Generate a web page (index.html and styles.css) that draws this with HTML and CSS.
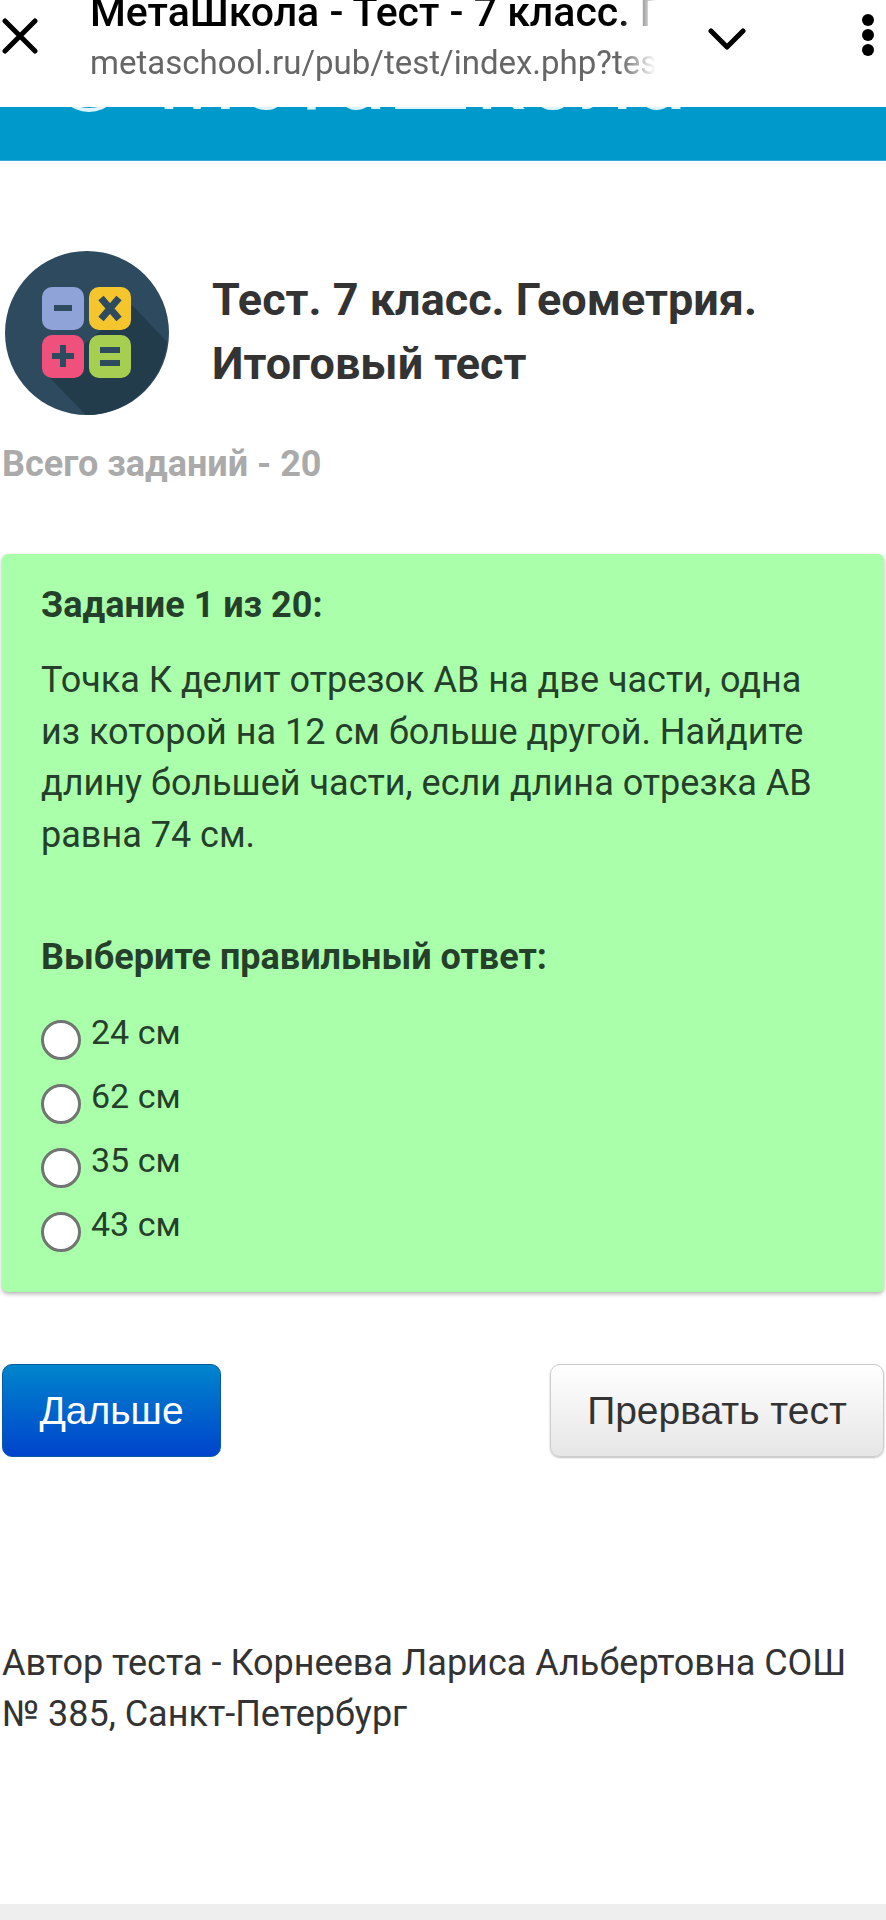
FILE: index.html
```html
<!DOCTYPE html>
<html lang="ru">
<head>
  <meta charset="UTF-8">
  <meta name="viewport" content="width=device-width, initial-scale=1.0">
  <title>МетаШкола - Тест - 7 класс</title>
  <link rel="stylesheet" href="styles.css">
</head>
<body>

  <!-- browser custom tab bar -->
  <div class="tabbar">
    <svg class="tab-close" width="36" height="36" viewBox="0 0 36 36">
      <path d="M3 3 L33 33 M33 3 L3 33" fill="none" stroke="#000" stroke-width="5" stroke-linecap="round"/>
    </svg>
    <div class="tab-titles">
      <div class="tab-title">МетаШкола - Тест - 7 класс. Г</div>
      <div class="tab-url">metaschool.ru/pub/test/index.php?tes</div>
    </div>
    <svg class="tab-chevron" width="38" height="22" viewBox="0 0 38 22">
      <path d="M3 3 L19 19 L35 3" fill="none" stroke="#000" stroke-width="5" stroke-linecap="round" stroke-linejoin="round"/>
    </svg>
    <div class="tab-menu"><span></span><span></span><span></span></div>
  </div>

  <div class="banner">
    <div class="banner-logo"><span class="banner-ring"></span><span class="banner-name">МетаШкола</span></div>
  </div>

  <div class="page">
    <div class="test-head">
      <svg class="test-icon" width="166" height="166" viewBox="0 0 166 166">
        <circle cx="83" cy="83" r="82" fill="#2e4a5e"/>
        <path d="M128 55 L163 92 A82 82 0 0 1 82 165 L43 125 Z" fill="#233c4b"/>
        <rect x="38" y="37" width="42" height="43" rx="10" fill="#8fa3d8"/>
        <rect x="85" y="37" width="42" height="43" rx="10" fill="#f5c52e"/>
        <rect x="38" y="85" width="42" height="43" rx="10" fill="#f0507c"/>
        <rect x="85" y="85" width="42" height="43" rx="10" fill="#a6cf52"/>
        <path d="M50 58 H68" stroke="#2e4a5e" stroke-width="6"/>
        <path d="M97 48 L115 69 M115 48 L97 69" stroke="#2e4a5e" stroke-width="7"/>
        <path d="M48 106 H70 M59 95 V117" stroke="#2e4a5e" stroke-width="6"/>
        <path d="M96 100 H116 M96 113 H116" stroke="#2e4a5e" stroke-width="6"/>
      </svg>
      <h1 class="test-title">Тест. 7 класс. Геометрия. Итоговый тест</h1>
    </div>

    <div class="test-count">Всего заданий - 20</div>

    <div class="task-card">
      <div class="task-num">Задание 1 из 20:</div>
      <div class="task-text">Точка К делит отрезок АВ на две части, одна из которой на 12 см больше другой. Найдите длину большей части, если длина отрезка АВ равна 74 см.</div>
      <div class="task-ask">Выберите правильный ответ:</div>
      <div class="answers">
        <div class="answer"><span class="radio"></span><span>24 см</span></div>
        <div class="answer"><span class="radio"></span><span>62 см</span></div>
        <div class="answer"><span class="radio"></span><span>35 см</span></div>
        <div class="answer"><span class="radio"></span><span>43 см</span></div>
      </div>
    </div>

    <div class="actions">
      <button class="btn btn-next">Дальше</button>
      <button class="btn btn-stop">Прервать тест</button>
    </div>

    <div class="author">Автор теста - Корнеева Лариса Альбертовна СОШ № 385, Санкт-Петербург</div>
  </div>

  <div class="footer-strip"></div>

</body>
</html>
```

FILE: styles.css
```css
html, body {
  margin: 0;
  padding: 0;
}

body {
  position: relative;
  height: 1920px;
  overflow: hidden;
  background-color: #fff;
  font-family: Roboto, "Noto Sans", sans-serif;
  color: #333;
  display: flex;
  flex-direction: column;
}

.tabbar {
  position: absolute;
  top: 0;
  left: 0;
  right: 0;
  height: 107px;
  background-color: #fff;
  display: flex;
  align-items: flex-start;
  overflow: hidden;
}

.tab-close {
  margin: 18px 0 0 2px;
  flex: none;
}

.tab-titles {
  width: 566px;
  margin: -10px 0 0 52px;
  flex: none;
  overflow: hidden;
  white-space: nowrap;
  -webkit-mask-image: linear-gradient(to right, #000 530px, transparent 566px);
  mask-image: linear-gradient(to right, #000 530px, transparent 566px);
}

.tab-title {
  font-size: 41px;
  font-weight: 500;
  line-height: 44px;
  color: #000;
}

.tab-url {
  font-size: 33px;
  line-height: 40px;
  margin-top: 9px;
  color: #666;
}

.tab-chevron {
  margin: 28px 0 0 52px;
  flex: none;
}

.tab-menu {
  margin: 14px 0 0 116px;
  display: flex;
  flex-direction: column;
  gap: 3px;
}

.tab-menu span {
  width: 12px;
  height: 12px;
  border-radius: 50%;
  background-color: #000;
}

.banner {
  height: 161px;
  flex: none;
  background-color: #0099cc;
  border-bottom: 1px solid #33aad4;
  box-sizing: border-box;
  overflow: hidden;
}

.banner-logo {
  display: flex;
  align-items: center;
  height: 116px;
  margin-top: -7px;
  padding-left: 55px;
  gap: 34px;
  color: #fff;
}

.banner-ring {
  width: 60px;
  height: 60px;
  margin-top: 54px;
  border: 4px solid #dff3fa;
  border-radius: 50%;
  flex: none;
}

.banner-name {
  font-size: 92px;
  line-height: 88px;
  margin-top: 54px;
  letter-spacing: 2px;
  color: #dff3fa;
}

.page {
  flex: 1;
  padding: 0 2px;
}

.test-head {
  display: flex;
  align-items: center;
  gap: 42px;
  margin-top: 89px;
  padding-left: 2px;
}

.test-icon {
  flex: none;
}

.test-title {
  margin: -2px 0 0;
  font-size: 45px;
  font-weight: 700;
  line-height: 64px;
  color: #333;
  width: 640px;
}

.test-count {
  margin-top: 23px;
  font-size: 36px;
  font-weight: 700;
  line-height: 50px;
  color: #aaa;
}

.task-card {
  margin-top: 65px;
  height: 738px;
  box-sizing: border-box;
  padding: 26px 60px 0 39px;
  background-color: #aaffaa;
  border-radius: 6px;
  box-shadow: 0 2px 4px rgba(0, 0, 0, 0.3);
  color: #25402a;
}

.task-num,
.task-ask {
  font-size: 36px;
  font-weight: 700;
  line-height: 50px;
}

.task-text {
  margin-top: 25px;
  font-size: 36px;
  line-height: 51.5px;
}

.task-ask {
  margin-top: 71px;
}

.answers {
  margin-top: 28px;
  display: flex;
  flex-direction: column;
  gap: 20px;
}

.answer {
  display: flex;
  height: 44px;
  font-size: 34px;
  line-height: 44px;
  gap: 10px;
}

.radio {
  width: 40px;
  height: 40px;
  margin-top: 10px;
  box-sizing: border-box;
  border: 3px solid #6f756f;
  border-radius: 50%;
  background-color: #fff;
  flex: none;
}

.actions {
  display: flex;
  justify-content: space-between;
  margin-top: 72px;
}

.btn {
  height: 93px;
  box-sizing: border-box;
  border-radius: 10px;
  font-family: "Liberation Sans", Arial, sans-serif;
  font-size: 39px;
  padding: 0;
}

.btn-next {
  width: 219px;
  color: #fff;
  background: linear-gradient(to bottom, #0085cc, #0044cc);
  border: 1px solid #0a5aa0;
}

.btn-stop {
  width: 334px;
  color: #333;
  background: linear-gradient(to bottom, #ffffff, #e6e6e6);
  border: 1px solid #ccc;
  box-shadow: 0 1px 2px rgba(0, 0, 0, 0.25);
}

.author {
  margin-top: 181px;
  font-size: 36px;
  line-height: 51px;
  color: #333;
}

.footer-strip {
  height: 16px;
  flex: none;
  background-color: #eeeeee;
}
```
